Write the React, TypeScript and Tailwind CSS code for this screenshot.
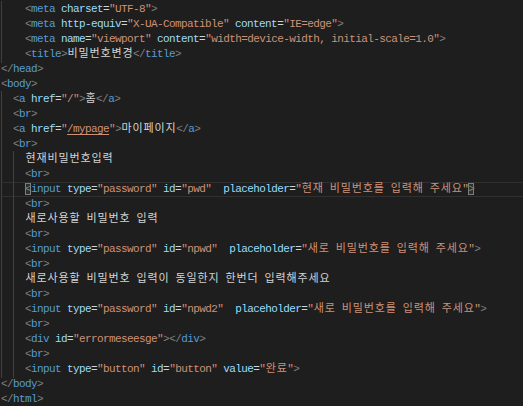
type Seg = [string, string];

const P = "text-[#808080]";
const T = "text-[#569cd6]";
const A = "text-[#9cdcfe]";
const E = "text-[#d4d4d4]";
const S = "text-[#ce9178]";
const X = "text-[#d4d4d4]";

const open = (tag: string, attrs: [string, string][] = [], close = false): Seg[] => {
  const segs: Seg[] = [[close ? "</" : "<", P], [tag, T]];
  attrs.forEach(([k, v]) => {
    segs.push([" " + k, A], ["=", E], ['"' + v + '"', S]);
  });
  segs.push([">", P]);
  return segs;
};

// each hangul syllable takes a fixed 11px cell, like the editor's grid
const Txt = ({ t }: { t: string }) => (
  <>
    {t.split(/([\uac00-\ud7a3])/).map((part, k) =>
      /[\uac00-\ud7a3]/.test(part) ? (
        <span key={k} className="inline-block w-[11px] text-center tracking-normal">
          {part}
        </span>
      ) : (
        part
      )
    )}
  </>
);

type Line = { indent: number; segs: Seg[]; guides: number[]; active?: boolean };

const pwInput = (id: string, ph: string): Seg[] => [
  ["<", P],
  ["input", T],
  [" type", A],
  ["=", E],
  ['"password"', S],
  [" id", A],
  ["=", E],
  ['"' + id + '"', S],
  ["  placeholder", A],
  ["=", E],
  ['"' + ph + '"', S],
  [">", P],
];

const lines: Line[] = [
  { indent: 4, guides: [1], segs: open("meta", [["charset", "UTF-8"]]) },
  { indent: 4, guides: [1], segs: open("meta", [["http-equiv", "X-UA-Compatible"], ["content", "IE=edge"]]) },
  { indent: 4, guides: [1], segs: open("meta", [["name", "viewport"], ["content", "width=device-width, initial-scale=1.0"]]) },
  { indent: 4, guides: [1], segs: [...open("title"), ["비밀번호변경", X], ...open("title", [], true)] },
  { indent: 0, guides: [], segs: open("head", [], true) },
  { indent: 0, guides: [], segs: open("body") },
  { indent: 2, guides: [1], segs: [...open("a", [["href", "/"]]), ["홈", X], ...open("a", [], true)] },
  { indent: 2, guides: [1], segs: open("br") },
  {
    indent: 2,
    guides: [1],
    segs: [["<", P], ["a", T], [" href", A], ["=", E], ['"', S], ["/mypage", "LINK"], ['"', S], [">", P], ["마이페이지", X], ...open("a", [], true)],
  },
  { indent: 2, guides: [1], segs: open("br") },
  { indent: 4, guides: [1, 13], segs: [["현재비밀번호입력", X]] },
  { indent: 4, guides: [1, 13], segs: open("br") },
  { indent: 4, guides: [1, 13], active: true, segs: pwInput("pwd", "현재 비밀번호를 입력해 주세요") },
  { indent: 4, guides: [1, 13], segs: open("br") },
  { indent: 4, guides: [1, 13], segs: [["새로사용할 비밀번호 입력", X]] },
  { indent: 4, guides: [1, 13], segs: open("br") },
  { indent: 4, guides: [1, 13], segs: pwInput("npwd", "새로 비밀번호를 입력해 주세요") },
  { indent: 4, guides: [1, 13], segs: open("br") },
  { indent: 4, guides: [1, 13], segs: [["새로사용할 비밀번호 입력이 동일한지 한번더 입력해주세요", X]] },
  { indent: 4, guides: [1, 13], segs: open("br") },
  { indent: 4, guides: [1, 13], segs: pwInput("npwd2", "새로 비밀번호를 입력해 주세요") },
  { indent: 4, guides: [1, 13], segs: open("br") },
  { indent: 4, guides: [1, 13], segs: [...open("div", [["id", "errormeseesge"]]), ...open("div", [], true)] },
  { indent: 4, guides: [1, 13], segs: open("br") },
  { indent: 4, guides: [1, 13], segs: open("input", [["type", "button"], ["id", "button"], ["value", "완료"]]) },
  { indent: 0, guides: [], segs: open("body", [], true) },
  { indent: 0, guides: [], segs: open("html", [], true) },
];

export default function App() {
  return (
    <div
      className="w-[523px] h-[406px] overflow-hidden bg-[#1e1e1e] pt-[2px] pl-[1px] text-[11px] tracking-[-0.6px] leading-[15px]"
      style={{ fontFamily: '"Liberation Mono", "Noto Sans CJK KR", monospace' }}
    >
      {lines.map((line, i) => (
        <div
          key={i}
          className={
            line.active
              ? "relative h-[15px] whitespace-pre border-y border-[#303030] leading-[13px]"
              : "relative h-[15px] whitespace-pre"
          }
        >
          {line.guides.map((g) => (
            <span
              key={g}
              className={
                g === 1
                  ? "absolute left-0 -top-px -bottom-px w-px bg-[#404040]"
                  : "absolute left-[12px] -top-px -bottom-px w-px bg-[#404040]"
              }
            />
          ))}
          <span>{" ".repeat(line.indent)}</span>
          {line.segs.map(([t, c], j) => {
            const last = j === line.segs.length - 1;
            if (c === "LINK")
              return (
                <span key={j} className="text-[#ce9178] underline decoration-[#ce9178] underline-offset-2">
                  {t}
                </span>
              );
            if (line.active && (j === 0 || last))
              return (
                <span key={j} className="text-[#808080] outline outline-1 -outline-offset-1 outline-[#7a7f7a] bg-[#2a332a]">
                  {t}
                </span>
              );
            return (
              <span key={j} className={c}>
                <Txt t={t} />
              </span>
            );
          })}
        </div>
      ))}
    </div>
  );
}
